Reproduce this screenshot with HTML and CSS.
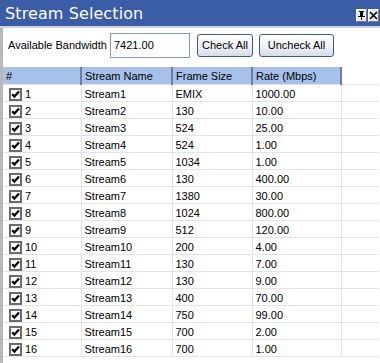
FILE: index.html
```html
<!DOCTYPE html>
<html lang="en">
<head>
    <meta charset="UTF-8">
    <title>Stream Selection</title>
    <link rel="stylesheet" href="styles.css">
</head>
<body>
    <div class="panel">
        <div class="titlebar">
            <span class="title">Stream Selection</span>
            <div class="title-btns">
                <span class="tbtn">
                    <svg width="9" height="9" viewBox="0 0 9 9"><path d="M2 0h5v1H6v4h2v1H5v3H4V6H1V5h2V1H2z" fill="#000"/><rect x="5" y="1" width="1" height="4" fill="#000"/></svg>
                </span>
                <span class="tbtn">
                    <svg width="9" height="9" viewBox="0 0 9 9"><path d="M1 1l7 7M8 1l-7 7" stroke="#000" stroke-width="1.6"/></svg>
                </span>
            </div>
        </div>

        <div class="body">
            <div class="toolbar">
                <label class="bw-label">Available Bandwidth</label>
                <input class="bw-input" type="text" value="7421.00">
                <button class="btn btn-check">Check All</button>
                <button class="btn btn-uncheck">Uncheck All</button>
            </div>

            <table class="grid">
                <thead>
                    <tr>
                        <th class="c-num">#</th>
                        <th class="c-name">Stream Name</th>
                        <th class="c-frame">Frame Size</th>
                        <th class="c-rate">Rate (Mbps)</th>
                        <th class="c-fill"></th>
                    </tr>
                </thead>
                <tbody id="rows"></tbody>
            </table>
        </div>
    </div>

    <script>
        const streams = [
            ['EMIX', '1000.00'], ['130', '10.00'], ['524', '25.00'], ['524', '1.00'],
            ['1034', '1.00'], ['130', '400.00'], ['1380', '30.00'], ['1024', '800.00'],
            ['512', '120.00'], ['200', '4.00'], ['130', '7.00'], ['130', '9.00'],
            ['400', '70.00'], ['750', '99.00'], ['700', '2.00'], ['700', '1.00']
        ];

        const check = '<svg class="chk" width="13" height="13" viewBox="0 0 13 13">' +
            '<rect x="1" y="1" width="11" height="11" fill="#fff" stroke="#6b6b6b" stroke-width="2"/>' +
            '<path d="M3.2 6.2l2.2 2.4 4.6-5" fill="none" stroke="#000" stroke-width="2.2"/></svg>';

        const tbody = document.getElementById('rows');
        streams.forEach((s, i) => {
            const n = i + 1;
            const tr = document.createElement('tr');
            tr.innerHTML = '<td class="c-num">' + check + n + '</td>' +
                '<td>Stream' + n + '</td>' +
                '<td>' + s[0] + '</td>' +
                '<td>' + s[1] + '</td>' +
                '<td></td>';
            tbody.appendChild(tr);
        });
    </script>
</body>
</html>
```

FILE: styles.css
```css
* {
    margin: 0;
    padding: 0;
    box-sizing: border-box;
}

body {
    font-family: "Liberation Sans", Arial, sans-serif;
    font-size: 11px;
    color: #000;
    background: #fff;
    width: 380px;
    height: 363px;
    overflow: hidden;
}

.panel {
    width: 380px;
    height: 363px;
    background: #fff;
}

.titlebar {
    height: 28px;
    background: #3b5ca6;
    border-bottom: 2px solid #d0d3dc;
    display: flex;
    align-items: center;
    justify-content: space-between;
    padding: 0 1px 0 5px;
}

.title {
    font-family: "DejaVu Sans", sans-serif;
    font-size: 16px;
    color: #fff;
    letter-spacing: 0.1px;
}

.title-btns {
    display: flex;
    gap: 1px;
    align-self: flex-end;
    margin-bottom: 4px;
}

.tbtn {
    width: 11px;
    height: 13px;
    background: #e8e8e8;
    border: 1px solid #fff;
    border-right-color: #777;
    border-bottom-color: #777;
    display: flex;
    align-items: center;
    justify-content: center;
}

.body {
    border-left: 3px solid #b8b8b8;
    height: 335px;
}

.toolbar {
    display: flex;
    align-items: center;
    height: 34px;
    padding-left: 5px;
}

.bw-label {
    width: 102px;
    font-size: 11px;
}

.bw-input {
    width: 80px;
    height: 25px;
    border: 1px solid #7f9db9;
    font-family: inherit;
    font-size: 11px;
    padding-left: 3px;
    margin-right: 7px;
}

.btn {
    font-family: inherit;
    font-size: 11px;
    height: 23px;
    border: 1px solid #3d5a85;
    border-radius: 3px;
    background: linear-gradient(#ffffff 0%, #eef0f6 60%, #d5dbe8 100%);
    color: #000;
}

.btn-check {
    width: 56px;
    margin-right: 6px;
}

.btn-uncheck {
    width: 75px;
}

.grid {
    border-collapse: collapse;
    table-layout: fixed;
    width: 376px;
    margin-top: 5px;
}

.grid th {
    background: #a7c1ea;
    font-weight: normal;
    text-align: left;
    height: 17px;
    padding: 1px 0 0 3px;
    border-right: 2px solid #6f7f98;
    border-bottom: 1px solid #dfe3ea;
}

.grid th.c-fill {
    background: #fff;
    border-right: none;
    border-bottom: 1px solid #e4e4e4;
}

.grid td {
    height: 17px;
    padding: 3px 0 0 3px;
    border-right: 1px solid #e4e4e4;
    border-bottom: 1px solid #e4e4e4;
    white-space: nowrap;
}

.grid td:last-child {
    border-right: none;
}

.c-num { width: 78px; }
.c-name { width: 91px; }
.c-frame { width: 80px; }
.c-rate { width: 89px; }

.chk {
    display: inline-block;
    margin: 0 3px 0 3px;
    vertical-align: -3px;
}
```
